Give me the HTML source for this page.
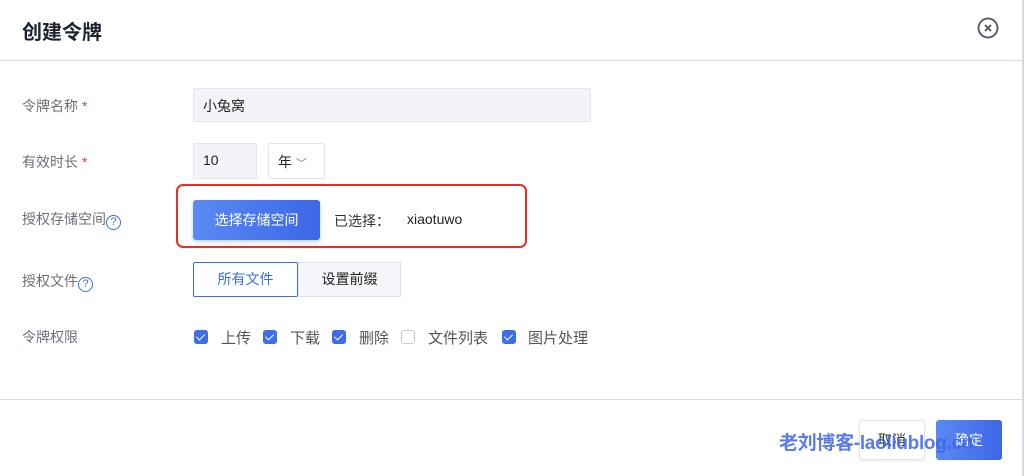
<!DOCTYPE html>
<html><head><meta charset="utf-8"><style>
*{margin:0;padding:0;box-sizing:border-box}
body{width:1024px;height:476px;background:#fff;font-family:"Liberation Sans","Noto Sans CJK SC",sans-serif;position:relative;overflow:hidden;color:#333}
.a{position:absolute}
.lbl{font-size:14px;color:#6b6f7a}
.star{color:#e54545}
.q{display:inline-block;width:15px;height:15px;border:1.4px solid #3b6cf0;border-radius:50%;color:#3b6cf0;font-size:11px;line-height:13px;text-align:center;vertical-align:-1px}
.cb{position:absolute;top:330px;width:14px;height:14px;border-radius:3px;background:#3b6ee8}
.cb::after{content:"";position:absolute;left:4px;top:2px;width:4px;height:7px;border:solid #fff;border-width:0 1.5px 1.5px 0;transform:rotate(45deg)}
.ct{position:absolute;top:327px;font-size:15px;color:#555}
</style></head><body>
<div class="a" style="right:0;top:0;width:2px;height:476px;background:#d5d8e0"></div>
<div class="a" style="left:22px;top:16px;font-size:20px;font-weight:bold;color:#1e2330">创建令牌</div>
<svg class="a" style="left:977px;top:17px" width="22" height="22" viewBox="0 0 22 22"><circle cx="11" cy="11" r="9.5" fill="none" stroke="#5a6070" stroke-width="2"/><path d="M8 8L14 14M14 8L8 14" stroke="#5a6070" stroke-width="2"/></svg>
<div class="a" style="left:0;top:60px;width:1022px;height:1px;background:#d8dbe3"></div>

<div class="a lbl" style="left:22px;top:96px">令牌名称 <span class="star">*</span></div>
<div class="a" style="left:193px;top:88px;width:398px;height:34px;background:#f3f4f8;border:1px solid #e4e6ee;border-radius:2px;font-size:14px;padding:7px 9px;color:#222">小兔窝</div>

<div class="a lbl" style="left:22px;top:152px">有效时长 <span class="star">*</span></div>
<div class="a" style="left:193px;top:143px;width:64px;height:36px;background:#f3f4f8;border:1px solid #e4e6ee;border-radius:2px;font-size:14px;padding:8px 9px;color:#222">10</div>
<div class="a" style="left:268px;top:143px;width:57px;height:36px;background:#fff;border:1px solid #e4e6ee;border-radius:2px;font-size:14px;padding:8px 9px;color:#222">年 <span style="font-size:11px;color:#777">﹀</span></div>

<div class="a lbl" style="left:22px;top:209px">授权存储空间<span class="q">?</span></div>
<div class="a" style="left:176px;top:184px;width:351px;height:64px;border:2px solid #ee2b24;border-radius:7px"></div>
<div class="a" style="left:193px;top:200px;width:127px;height:40px;background:linear-gradient(90deg,#5a8af2,#3c66e8);border-radius:3px;box-shadow:0 2px 4px rgba(60,100,230,.3);color:#fff;font-size:14px;text-align:center;line-height:40px">选择存储空间</div>
<div class="a" style="left:334px;top:211px;font-size:14px;color:#333">已选择：</div>
<div class="a" style="left:407px;top:211px;font-size:14px;color:#222">xiaotuwo</div>

<div class="a lbl" style="left:22px;top:271px">授权文件<span class="q">?</span></div>
<div class="a" style="left:193px;top:262px;width:105px;height:35px;border:1.5px solid #3b6cf0;border-radius:2px;color:#3b6cf0;font-size:14px;text-align:center;line-height:32px;background:#fff">所有文件</div>
<div class="a" style="left:298px;top:262px;width:103px;height:35px;border:1px solid #e2e4ea;background:#f5f6f9;color:#222;font-size:14px;text-align:center;line-height:33px">设置前缀</div>

<div class="a lbl" style="left:22px;top:327px">令牌权限</div>
<div class="cb" style="left:194px"></div><div class="ct" style="left:221px">上传</div>
<div class="cb" style="left:263px"></div><div class="ct" style="left:290px">下载</div>
<div class="cb" style="left:332px"></div><div class="ct" style="left:359px">删除</div>
<div class="a" style="left:401px;top:330px;width:14px;height:14px;border:1px solid #c8ccd6;border-radius:3px"></div><div class="ct" style="left:428px">文件列表</div>
<div class="cb" style="left:502px"></div><div class="ct" style="left:528px">图片处理</div>

<div class="a" style="left:0;top:399px;width:1022px;height:1px;background:#d8dbe3"></div>
<div class="a" style="left:859px;top:420px;width:66px;height:40px;border:1px solid #e2e4ea;border-radius:3px;background:#fff;box-shadow:0 1px 3px rgba(0,0,0,.1);font-size:14px;text-align:center;line-height:38px;color:#333">取消</div>
<div class="a" style="left:936px;top:420px;width:66px;height:40px;border-radius:3px;background:linear-gradient(90deg,#5a8af2,#3c66e8);font-size:14px;text-align:center;line-height:40px;color:#fff">确定</div>
<div class="a" style="left:779px;top:428px;font-size:19px;font-weight:bold;color:rgba(60,100,235,.85);letter-spacing:-0.3px">老刘博客-laoliublog.cn</div>
</body></html>
